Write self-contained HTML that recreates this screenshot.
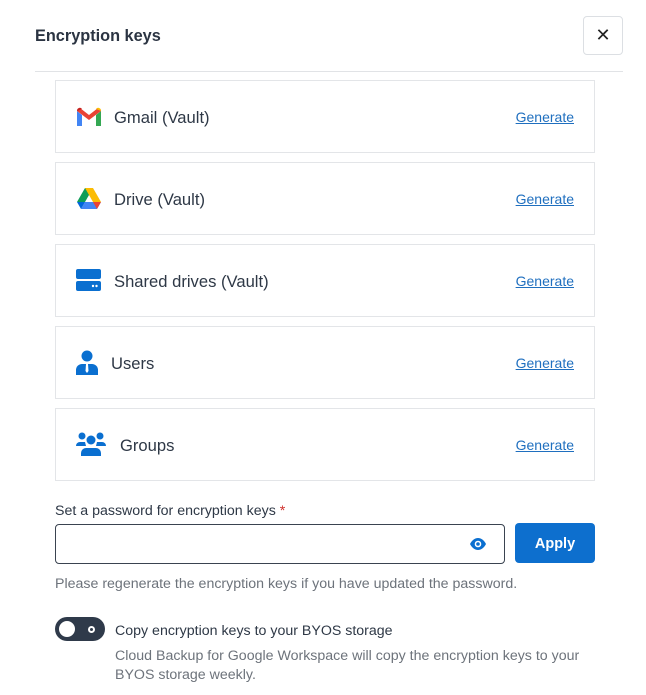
<!DOCTYPE html>
<html><head><style>
*{box-sizing:border-box;margin:0;padding:0}
body{width:646px;height:695px;background:#fff;font-family:"Liberation Sans",sans-serif;color:#2e3846;position:relative;overflow:hidden}
.t{position:absolute;left:35px;top:27px;font-size:16.3px;font-weight:bold;color:#2b3442}
.x{position:absolute;left:583px;top:16px;width:40px;height:39px;border:1px solid #dcdfe3;border-radius:4px;font-size:18px;text-align:center;line-height:37px;color:#222}
.hr{position:absolute;left:35px;top:71px;width:588px;height:1px;background:#e1e3e6}
.card{position:absolute;left:55px;width:540px;height:73px;border:1px solid #e3e5e8;}
.card svg{position:absolute;left:20px;top:25px}
.card .n{position:absolute;top:27px;font-size:16.6px;color:#2e3846}
.card a{position:absolute;right:20px;top:28px;font-size:14px;color:#1f6fbf;text-decoration:underline}
.lbl{position:absolute;left:55px;top:503px;font-size:14.2px;color:#2e3846}
.lbl span{color:#d0312d}
.inp{position:absolute;left:55px;top:524px;width:450px;height:40px;border:1px solid #3a4350;border-radius:4px}
.btn{position:absolute;left:515px;top:523px;width:80px;height:40px;background:#0d6fce;border-radius:4px;color:#fff;font-weight:bold;font-size:14.5px;text-align:center;line-height:43px}
.help{position:absolute;left:55px;top:576px;font-size:14.2px;color:#6d737b}
.tg{position:absolute;left:55px;top:617px;width:50px;height:24px;border-radius:12px;background:#2f3a4a}
.tg:before{content:"";position:absolute;left:4px;top:4px;width:16px;height:16px;border-radius:50%;background:#fff}
.tg:after{content:"";position:absolute;left:33px;top:9px;width:3px;height:3px;border-radius:50%;border:2px solid #fff;background:#2f3a4a}
.ct{position:absolute;left:115px;top:623px;font-size:14.2px;color:#2e3846}
.cd{position:absolute;left:115px;top:647px;font-size:14.2px;line-height:19px;color:#6d737b;width:480px}
</style></head><body>
<div class="t">Encryption keys</div>
<div class="x">✕</div>
<div class="hr"></div>

<div class="card" style="top:80px">
<svg width="26" height="22" viewBox="0 0 26 22"><path d="M1 5v15h5V9z" fill="#4285f4"/><path d="M20 9v11h5V5z" fill="#34a853"/><path d="M1 5l12 9 12-9-3-3-9 7-9-7z" fill="#ea4335"/><path d="M20 3l5 2V4a3 3 0 0 0-4-2z" fill="#fbbc04"/><path d="M1 4a3 3 0 0 1 4-2l1 1-5 2z" fill="#c5221f"/></svg>
<div class="n" style="left:58px">Gmail (Vault)</div><a>Generate</a></div>

<div class="card" style="top:162px">
<svg width="26" height="23" viewBox="0 0 26 23" style="top:24px"><path d="M9 1h8l-8 14H1z" fill="#0f9d58"/><path d="M17 1l8 14h-8L9 1z" fill="#fbbc04"/><path d="M5 22l4-7h16l-4 7z" fill="#4285f4"/><path d="M1 15l4 7 4-7z" fill="#0066da"/><path d="M25 15l-4 7-4-7z" fill="#ea4335"/></svg>
<div class="n" style="left:58px">Drive (Vault)</div><a>Generate</a></div>

<div class="card" style="top:244px">
<svg width="25" height="23" viewBox="0 0 25 23" style="top:24px"><rect x="0" y="0" width="25" height="10" rx="2" fill="#0a6fd0"/><rect x="0" y="12" width="25" height="10" rx="2" fill="#0a6fd0"/><circle cx="17" cy="17" r="1.2" fill="#fff"/><circle cx="20.5" cy="17" r="1.2" fill="#fff"/></svg>
<div class="n" style="left:58px">Shared drives (Vault)</div><a>Generate</a></div>

<div class="card" style="top:326px">
<svg width="22" height="25" viewBox="0 0 22 25" style="top:23px"><circle cx="11" cy="6" r="5.5" fill="#0a6fd0"/><path d="M0 25v-5a6 6 0 0 1 6-6h10a6 6 0 0 1 6 6v5z" fill="#0a6fd0"/><path d="M10 14h2l.5 7-1.5 2-1.5-2z" fill="#fff"/></svg>
<div class="n" style="left:55px">Users</div><a>Generate</a></div>

<div class="card" style="top:408px">
<svg width="30" height="25" viewBox="0 0 30 25" style="top:23px"><circle cx="6" cy="4" r="3.5" fill="#0a6fd0"/><circle cx="24" cy="4" r="3.5" fill="#0a6fd0"/><circle cx="15" cy="8" r="4.5" fill="#0a6fd0"/><path d="M0 14a4 4 0 0 1 4-4h5l1 4z" fill="#0a6fd0"/><path d="M30 14a4 4 0 0 0-4-4h-5l-1 4z" fill="#0a6fd0"/><path d="M5 24v-3a5 5 0 0 1 5-5h10a5 5 0 0 1 5 5v3z" fill="#0a6fd0"/></svg>
<div class="n" style="left:64px">Groups</div><a>Generate</a></div>

<div class="lbl">Set a password for encryption keys <span>*</span></div>
<div class="inp"><svg width="18" height="14" viewBox="0 0 18 14" style="position:absolute;left:413px;top:12px"><path d="M1 7c2-4 5-6 8-6s6 2 8 6c-2 4-5 6-8 6s-6-2-8-6z" fill="#0a6fd0"/><circle cx="9" cy="7" r="3.3" fill="#fff"/><circle cx="9" cy="7" r="1.8" fill="#0a6fd0"/></svg></div>
<div class="btn">Apply</div>
<div class="help">Please regenerate the encryption keys if you have updated the password.</div>
<div class="tg"></div>
<div class="ct">Copy encryption keys to your BYOS storage</div>
<div class="cd">Cloud Backup for Google Workspace will copy the encryption keys to your BYOS storage weekly.</div>
</body></html>
